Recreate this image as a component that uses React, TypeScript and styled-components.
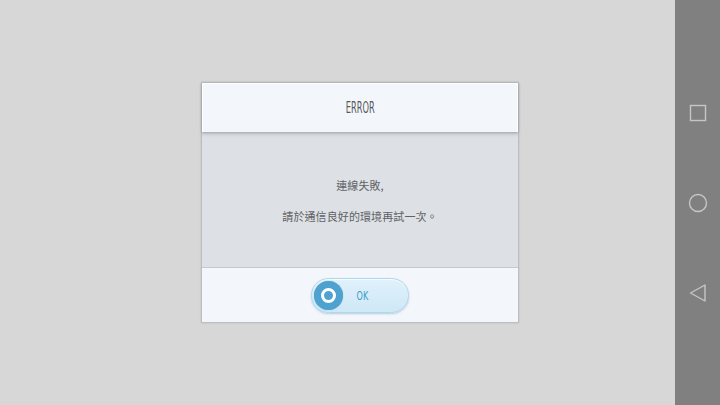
import React from 'react';
import styled, { createGlobalStyle } from 'styled-components';

const GlobalStyle = createGlobalStyle`
    html, body {
        margin: 0;
        padding: 0;
        width: 720px;
        height: 405px;
        overflow: hidden;
        background: #d7d7d7;
        font-family: 'Noto Sans CJK TC', 'Noto Sans', sans-serif;
    }
`;

const Screen = styled.div`
    position: relative;
    width: 720px;
    height: 405px;
    display: flex;
    justify-content: center;
    align-items: center;
    background: #d7d7d7;
`;

const Dialog = styled.div`
    width: 316px;
    height: 239px;
    display: flex;
    flex-direction: column;
    border: 1px solid #bdbec0;
    box-shadow: 0 0 2px rgba(0, 0, 0, 0.12);
    background: #f3f6fa;
`;

const Header = styled.div`
    height: 48px;
    display: flex;
    align-items: center;
    justify-content: center;
    background: #f3f6fa;
    border: 1px solid #ffffff;
    border-bottom: none;
    box-shadow: 0 1px 3px rgba(0, 0, 0, 0.25);
    position: relative;
    z-index: 1;
`;

const Condensed = styled.span<{ $size: number; $color: string; $scale: number }>`
    display: inline-block;
    font-family: 'DejaVu Sans', sans-serif;
    font-size: ${p => p.$size}px;
    line-height: 1;
    color: ${p => p.$color};
    transform: scaleX(${p => p.$scale});
`;

const Body = styled.div`
    flex: 1;
    display: flex;
    flex-direction: column;
    align-items: center;
    justify-content: center;
    gap: 14px;
    background: linear-gradient(#d3d6da 0px, #dde0e4 7px, #dde0e4 100%);
    border-bottom: 1px solid #c6c9cd;
    padding-top: 2px;
`;

const Line = styled.div`
    font-size: 11px;
    line-height: 17px;
    color: #606266;
    letter-spacing: 0.1px;
`;

const Footer = styled.div`
    height: 54px;
    display: flex;
    align-items: center;
    justify-content: center;
    background: #f3f6fa;
`;

const OkButton = styled.button`
    width: 98px;
    height: 35px;
    padding: 0 0 0 2px;
    display: flex;
    align-items: center;
    border-radius: 18px;
    border: 1px solid #b0d8ec;
    background: linear-gradient(#dff1fb, #cfe8f6);
    box-shadow: 0 1px 2px rgba(70, 130, 170, 0.35), inset 0 1px 1px rgba(255, 255, 255, 0.8);
    cursor: pointer;
`;

const Knob = styled.span`
    width: 29px;
    height: 29px;
    border-radius: 50%;
    background: #4ea2cf;
    display: flex;
    align-items: center;
    justify-content: center;
    box-shadow: 0 0 1px rgba(40, 100, 140, 0.5);
`;

const Ring = styled.span`
    width: 9px;
    height: 9px;
    border-radius: 50%;
    border: 3px solid #ffffff;
    background: #4fa3d0;
`;

const OkLabel = styled.span`
    flex: 1;
    display: flex;
    justify-content: center;
    padding-right: 26px;
`;

const NavBar = styled.div`
    position: absolute;
    top: 0;
    right: 0;
    width: 45px;
    height: 405px;
    background: #808080;
    display: flex;
    flex-direction: column;
    align-items: center;
    justify-content: center;
    gap: 70px;
`;

const NavIcon = styled.svg`
    width: 20px;
    height: 20px;
    fill: none;
    stroke: #c6c6c6;
    stroke-width: 1.4;
`;

export default function App() {
    return (
        <>
            <GlobalStyle />
            <Screen>
                <Dialog>
                    <Header>
                        <Condensed $size={15} $color="#55575b" $scale={0.55}>ERROR</Condensed>
                    </Header>
                    <Body>
                        <Line>連線失敗,</Line>
                        <Line>請於通信良好的環境再試一次。</Line>
                    </Body>
                    <Footer>
                        <OkButton>
                            <Knob>
                                <Ring />
                            </Knob>
                            <OkLabel>
                                <Condensed $size={13} $color="#3f9acb" $scale={0.62}>OK</Condensed>
                            </OkLabel>
                        </OkButton>
                    </Footer>
                </Dialog>
                <NavBar>
                    <NavIcon viewBox="0 0 20 20">
                        <rect x="2.5" y="2.5" width="15" height="15" />
                    </NavIcon>
                    <NavIcon viewBox="0 0 20 20">
                        <circle cx="10" cy="10" r="8.5" />
                    </NavIcon>
                    <NavIcon viewBox="0 0 20 20">
                        <path d="M17 2 L2.5 10 L17 18 Z" strokeLinejoin="round" />
                    </NavIcon>
                </NavBar>
            </Screen>
        </>
    );
}
